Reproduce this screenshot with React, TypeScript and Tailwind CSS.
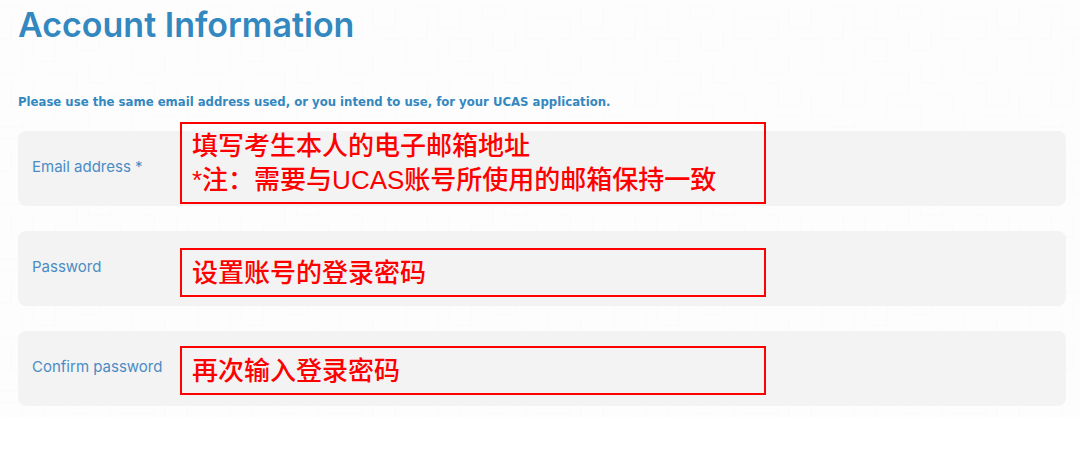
import { useState } from 'react'

interface Field {
  id: string
  label: string
  type: 'email' | 'password'
  note: string[]
  noteCls: string
}

const FIELDS: Field[] = [
  {
    id: 'email',
    label: 'Email address *',
    type: 'email',
    note: ['填写考生本人的电子邮箱地址', '*注：需要与UCAS账号所使用的邮箱保持一致'],
    noteCls: '-top-[9px] pt-[5px]',
  },
  { id: 'password', label: 'Password', type: 'password', note: ['设置账号的登录密码'], noteCls: 'top-[17px] pt-[6px]' },
  { id: 'confirm', label: 'Confirm password', type: 'password', note: ['再次输入登录密码'], noteCls: 'top-[15px] pt-[6px]' },
]

function Texture() {
  return (
    <svg className="absolute inset-0 w-full h-full" aria-hidden="true">
      <defs>
        <pattern id="maze" width="208" height="132" patternUnits="userSpaceOnUse">
          <path
            d="M0 6H22V28H44V6M11 17V39H0M33 39H55V61H33ZM66 6H88V17H66ZM77 28V50H99V28M110 6V39H132M121 17H154V39H143M165 6V28H187V6M176 39H198V61M0 72H22V50M11 83V105H33V83M44 72H77V94H55V116M88 61V83H110V61M99 94H121V116M132 50V72H165V50M143 83H154V105H176V83M187 72H208M187 94V116H208M66 105H88V127M0 127H22V116M132 116V132M154 116H176"
            fill="none"
            stroke="#fafafa"
          />
        </pattern>
      </defs>
      <rect width="100%" height="100%" fill="url(#maze)" />
    </svg>
  )
}

function FieldRow({ field, value, onChange }: { field: Field; value: string; onChange: (v: string) => void }) {
  return (
    <div className="flex items-stretch min-h-[75px] rounded-lg bg-[#f3f3f3] pl-[14px]">
      <label
        htmlFor={field.id}
        className="w-[148px] shrink-0 pt-6 text-[15px] leading-6 text-[#4a8cc4] whitespace-nowrap"
      >
        {field.label}
      </label>
      <div className="relative w-[586px]">
        <input
          id={field.id}
          type={field.type}
          value={value}
          onChange={e => onChange(e.target.value)}
          className="w-full h-full px-3 bg-transparent outline-none"
        />
        <div
          className={`absolute inset-x-0 pl-[10px] pb-[5px] border-2 border-[#ff0000] text-[#ff0000] text-[26px] leading-[34px] font-medium pointer-events-none font-['Liberation_Sans','Noto_Sans_CJK_SC',sans-serif] ${field.noteCls}`}
        >
          {field.note.map(line => (
            <p key={line} className="whitespace-nowrap">{line}</p>
          ))}
        </div>
      </div>
    </div>
  )
}

export default function App() {
  const [values, setValues] = useState<Record<string, string>>({})

  return (
    <div className="min-h-screen bg-white font-['Inter',sans-serif]">
      <main className="relative bg-[#fdfdfd] pt-1 pb-[11px] pl-[18px] pr-[14px]">
        <Texture />
        <form className="relative" onSubmit={e => e.preventDefault()}>
          <h1 className="text-[34px] leading-[42px] font-semibold text-[#3388c0]">Account Information</h1>
          <p className="mt-[46px] text-[13px] leading-[20px] font-bold text-[#3388c0] font-['DejaVu_Sans_Condensed','DejaVu_Sans',sans-serif]">
            Please use the same email address used, or you intend to use, for your UCAS application.
          </p>

          <div className="mt-[19px] flex flex-col gap-[25px]">
            {FIELDS.map(f => (
              <FieldRow
                key={f.id}
                field={f}
                value={values[f.id] ?? ''}
                onChange={v => setValues({ ...values, [f.id]: v })}
              />
            ))}
          </div>
        </form>
      </main>
    </div>
  )
}
